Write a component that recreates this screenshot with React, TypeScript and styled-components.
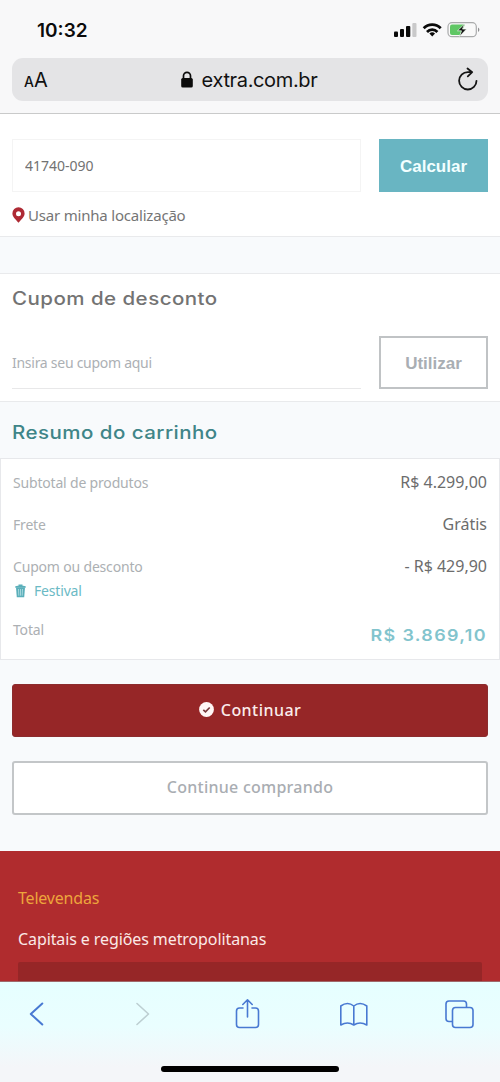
import React from 'react';
import styled, { createGlobalStyle } from 'styled-components';

const GlobalStyle = createGlobalStyle`
  * { box-sizing: border-box; }
  html, body { margin: 0; padding: 0; }
  body { background: #f8fafc; font-family: "Noto Sans", "Open Sans", sans-serif; color: #6b6b6b; }
  button, input { font: inherit; margin: 0; border-radius: 0; outline: none; }
`;

const Screen = styled.div`
  width: 500px;
  height: 1082px;
  display: flex;
  flex-direction: column;
  overflow: hidden;
  background: #f8fafc;
`;

const BrowserTop = styled.header`
  height: 114px;
  flex: none;
  padding: 0 12px;
  background: #f8f8f9;
  border-bottom: 1px solid #c9caca;
`;

const StatusBar = styled.div`
  height: 58px;
  display: flex;
  align-items: center;
  justify-content: space-between;
  padding: 2px 8px 0 25px;
`;

const Clock = styled.span`
  padding-top: 2px;
  font: 600 19px/24px Inter, sans-serif;
  letter-spacing: 0;
  color: #0b0b0b;
`;

const AddressBar = styled.div`
  height: 43px;
  display: flex;
  align-items: center;
  justify-content: space-between;
  padding: 0 9px 0 12px;
  border-radius: 11px;
  background: #e4e4e6;
  color: #111;
  font-family: Inter, sans-serif;
`;

const TextSize = styled.span`
  width: 60px;
  padding-top: 2px;
  font-size: 20px;
  line-height: 24px;
  small { font-size: 14px; font-weight: 500; }
`;

const Domain = styled.span`
  display: flex;
  align-items: center;
  gap: 9px;
  margin-right: 5px;
  font-size: 20px;
  line-height: 24px;
  letter-spacing: -0.35px;
`;

const ReloadSlot = styled.span`
  width: 60px;
  display: flex;
  justify-content: flex-end;
`;

const Panel = styled.section<{ $height: number; $top: number }>`
  height: ${p => p.$height}px;
  flex: none;
  padding: ${p => p.$top}px 12px 0;
  background: #fff;
  border-bottom: 1px solid #e9eaec;
`;

const Spacer = styled.div`
  height: 37px;
  flex: none;
  border-bottom: 1px solid #e9eaec;
`;

const FieldRow = styled.div<{ $offset?: number }>`
  height: 53px;
  margin-top: ${p => p.$offset ?? 0}px;
  display: grid;
  grid-template-columns: 349px 109px;
  gap: 18px;
`;

const Field = styled.input<{ $underline?: boolean }>`
  width: 100%;
  min-width: 0;
  height: 53px;
  padding: ${p => (p.$underline ? '0' : '0 12px')};
  border: ${p => (p.$underline ? '0' : '1px solid #f4f4f4')};
  border-bottom: 1px solid ${p => (p.$underline ? '#e8e8e9' : '#f4f4f4')};
  background: #fff;
  color: #727272;
  font-size: 14px;
  letter-spacing: ${p => (p.$underline ? '-0.27px' : '0')};
  &::placeholder { color: #acb0b4; opacity: 1; }
`;

const ActionButton = styled.button<{ $outline?: boolean }>`
  padding: 2px 0 0;
  border: ${p => (p.$outline ? '2px solid #c0c3c5' : '0')};
  background: ${p => (p.$outline ? '#fff' : '#69b5c2')};
  color: ${p => (p.$outline ? '#a9aeb3' : '#f2ffff')};
  font: 700 17px/20px "Liberation Sans", Arial, sans-serif;
`;

const LocationLink = styled.a`
  display: flex;
  align-items: center;
  gap: 3px;
  margin-top: 12px;
  font-size: 15px;
  line-height: 22px;
  letter-spacing: -0.2px;
  color: #757575;
`;

const Heading = styled.h2<{ $color: string }>`
  margin: 0;
  width: max-content;
  transform: scaleX(1.14);
  transform-origin: left;
  font: 500 18px/24px Inter, sans-serif;
  letter-spacing: 0.4px;
  color: ${p => p.$color};
`;

const SummaryHeader = styled.div`
  height: 56px;
  flex: none;
  padding: 19px 12px 0;
`;

const Summary = styled.section`
  height: 202px;
  flex: none;
  padding: 12px 12px 0;
  background: #fff;
  border: 1px solid #e7e8eb;
`;

const SummaryRow = styled.div<{ $height: number }>`
  height: ${p => p.$height}px;
  display: flex;
  justify-content: space-between;
  align-items: flex-start;
`;

const Label = styled.div`
  padding-top: 1px;
  font-size: 14px;
  line-height: 22px;
  letter-spacing: -0.18px;
  color: #acb0b3;
`;

const Amount = styled.div`
  font-size: 16px;
  line-height: 22px;
  color: #6c6c6c;
`;

const GrandTotal = styled.div`
  margin-top: 6px;
  font: 600 16px/22px Inter, sans-serif;
  letter-spacing: 1.2px;
  transform: scaleX(1.12);
  transform-origin: right;
  color: #82c4cd;
`;

const Coupon = styled.a`
  display: flex;
  align-items: center;
  gap: 8px;
  padding-left: 2px;
  margin-top: 2px;
  color: #6bbac5;
`;

const Actions = styled.div`
  flex: none;
  padding: 24px 12px 36px;
  display: flex;
  flex-direction: column;
  gap: 24px;
`;

const WideButton = styled.button<{ $primary?: boolean }>`
  height: ${p => (p.$primary ? 53 : 54)}px;
  display: flex;
  align-items: center;
  justify-content: center;
  gap: 7px;
  padding: 0 0 2px;
  border: ${p => (p.$primary ? '1px solid #8c2c2e' : '2px solid #c3c6c8')};
  border-radius: 3px;
  background: ${p => (p.$primary ? '#962627' : '#fff')};
  color: ${p => (p.$primary ? '#fbeceb' : '#a9adb2')};
  font-size: 16px;
  font-weight: 500;
  letter-spacing: ${p => (p.$primary ? 0.45 : 0.25)}px;
`;

const Footer = styled.footer`
  height: 130px;
  flex: none;
  overflow: hidden;
  padding: 35px 18px 0;
  background: #b02c2e;
  color: #fbe9e7;
`;

const FooterTitle = styled.h3`
  margin: 0 0 17px;
  font-size: 16px;
  line-height: 24px;
  font-weight: 400;
  letter-spacing: -0.2px;
  color: #eda53c;
`;

const FooterText = styled.p`
  margin: 0;
  font-size: 16px;
  line-height: 24px;
  letter-spacing: -0.1px;
`;

const PhoneBox = styled.div`
  height: 40px;
  margin-top: 11px;
  background: #962627;
  border-radius: 2px;
`;

const Toolbar = styled.nav`
  height: 101px;
  flex: none;
  display: flex;
  flex-direction: column;
  align-items: center;
  justify-content: space-between;
  border-top: 1px solid #a0686a;
  background: linear-gradient(#e6ffff 0, #eafeff 45px, #f4f6f9 85px);
  padding-bottom: 10px;
`;

const ToolbarIcons = styled.div`
  width: 100%;
  display: flex;
  justify-content: space-between;
  padding: 14px 26px 0 22px;
`;

const HomeIndicator = styled.div`
  width: 178px;
  height: 6px;
  border-radius: 3px;
  background: #000;
`;

const StatusIcons = () => (
  <svg width="88" height="20" viewBox="392 20 88 20">
    <rect x="394" y="31.5" width="4" height="5.5" rx="1" fill="#0a0a0a" />
    <rect x="400" y="29" width="4" height="8" rx="1" fill="#0a0a0a" />
    <rect x="406" y="26" width="4.3" height="11" rx="1" fill="#0a0a0a" />
    <rect x="412.3" y="23" width="4.2" height="14" rx="1" fill="#c9c9ca" />
    <g fill="none" stroke="#0a0a0a" strokeWidth="2.8">
      <path d="M423.7 28.2a12 12 0 0 1 17 0" />
      <path d="M427 31.9a7.3 7.3 0 0 1 10.4 0" />
    </g>
    <path d="M429.4 33.6a4 4 0 0 1 5.6 0L432.2 36.6z" fill="#0a0a0a" />
    <rect x="448" y="22.7" width="28.3" height="14" rx="4" fill="#f9f9f9" stroke="#a9aaab" strokeWidth="1.2" />
    <path d="M452 24.4h13l-5 10.600h-8q-2 0-2-2v-6.600q0-2 2-2z" fill="#60c765" />
    <path d="M464.500 24l-7 6.800h4l-2 5.600 7-7.300h-4z" fill="#111" stroke="#f4fff4" strokeWidth=".7" />
    <path d="M478 27.500v4.500q1.400-.8 1.400-2.250t-1.400-2.250" fill="#8d8e8f" />
  </svg>
);

const LockIcon = () => (
  <svg width="12" height="17" viewBox="0 0 12 17">
    <rect x=".2" y="7" width="11.600" height="9.500" rx="1.600" fill="#0b0b0b" />
    <path d="M2.500 8V4.800a3.500 3.500 0 0 1 7 0V8" fill="none" stroke="#0b0b0b" strokeWidth="1.700" />
  </svg>
);

const ReloadIcon = () => (
  <svg width="22" height="25" viewBox="457 67 22 25" fill="none" stroke="#151515" strokeWidth="1.800" strokeLinecap="round" strokeLinejoin="round">
    <path d="M476.500 80.800a8.700 8.700 0 1 1-8.700-8.700h4.400M467.500 68.500l4.700 3.700-4.400 4.100" />
  </svg>
);

const PinIcon = () => (
  <svg width="13" height="16" viewBox="0 0 13 16">
    <path fillRule="evenodd" d="M6.500.3a6.100 6.100 0 0 0-6.100 6.100c0 3.900 4.600 7 6.100 9.300 1.500-2.300 6.100-5.400 6.100-9.300A6.100 6.100 0 0 0 6.500.3zm0 3.900a2.500 2.500 0 1 1 0 5 2.500 2.500 0 0 1 0-5z" fill="#ae2a34" />
  </svg>
);

const TrashIcon = () => (
  <svg width="11" height="14" viewBox="0 0 11 14">
    <path d="M.3 2.300Q5.500.8 10.700 2.300v1.400H.3zM3.500 1.800V.6h4v1.200" fill="#5aafba" />
    <path d="M1 3.500h9l-.8 9.700H1.800z" fill="#5aafba" />
    <path d="M3.500 5l.3 6.700M5.500 5v6.700M7.500 5l-.3 6.700" stroke="#b9e0e4" strokeWidth=".8" />
  </svg>
);

const CheckIcon = () => (
  <svg width="15" height="15" viewBox="0 0 15 15">
    <circle cx="7.500" cy="7.500" r="7.400" fill="#fff6f5" />
    <path d="M4.300 7.800l2.200 2 4.200-4.300" fill="none" stroke="#78393c" strokeWidth="1.700" />
  </svg>
);

const NavIcon = styled.svg.attrs({ width: 30, height: 36, fill: 'none', strokeLinecap: 'round', strokeLinejoin: 'round' })<{ $muted?: boolean }>`
  stroke: ${p => (p.$muted ? '#bdcfd2' : '#4879d2')};
  stroke-width: 1.6;
`;

export default function App() {
  return (
    <>
      <GlobalStyle />
      <Screen>
        <BrowserTop>
          <StatusBar>
            <Clock>10:32</Clock>
            <StatusIcons />
          </StatusBar>
          <AddressBar>
            <TextSize><small>A</small>A</TextSize>
            <Domain><LockIcon />extra.com.br</Domain>
            <ReloadSlot><ReloadIcon /></ReloadSlot>
          </AddressBar>
        </BrowserTop>

        <Panel $height={123} $top={25}>
          <FieldRow>
            <Field defaultValue="41740-090" />
            <ActionButton>Calcular</ActionButton>
          </FieldRow>
          <LocationLink><PinIcon />Usar minha localização</LocationLink>
        </Panel>
        <Spacer />
        <Panel $height={128} $top={13}>
          <Heading $color="#737373">Cupom de desconto</Heading>
          <FieldRow $offset={25}>
            <Field $underline placeholder="Insira seu cupom aqui" />
            <ActionButton $outline>Utilizar</ActionButton>
          </FieldRow>
        </Panel>

        <SummaryHeader>
          <Heading $color="#3f8588">Resumo do carrinho</Heading>
        </SummaryHeader>
        <Summary>
          <SummaryRow $height={42}><Label>Subtotal de produtos</Label><Amount>R$ 4.299,00</Amount></SummaryRow>
          <SummaryRow $height={42}><Label>Frete</Label><Amount>Grátis</Amount></SummaryRow>
          <SummaryRow $height={63}>
            <Label>Cupom ou desconto<Coupon><TrashIcon />Festival</Coupon></Label>
            <Amount>- R$ 429,90</Amount>
          </SummaryRow>
          <SummaryRow $height={42}><Label>Total</Label><GrandTotal>R$ 3.869,10</GrandTotal></SummaryRow>
        </Summary>

        <Actions>
          <WideButton $primary><CheckIcon />Continuar</WideButton>
          <WideButton>Continue comprando</WideButton>
        </Actions>

        <Footer>
          <FooterTitle>Televendas</FooterTitle>
          <FooterText>Capitais e regiões metropolitanas</FooterText>
          <PhoneBox />
        </Footer>

        <Toolbar>
          <ToolbarIcons>
            <NavIcon viewBox="22 996 30 36"><path d="M42.300 1003.500L30.800 1014l11.500 10.500" strokeWidth="2" /></NavIcon>
            <NavIcon $muted viewBox="127.500 996 30 36"><path d="M136.500 1003.500L148 1014l-11.500 10.500" /></NavIcon>
            <NavIcon viewBox="233 996 30 36"><path d="M243 1008h-3.500q-3 0-3 3v13.500q0 3 3 3h16q3 0 3-3V1011q0-3-3-3H252M247.500 1017v-17M242.800 1004.500l4.700-4.700 4.700 4.700" /></NavIcon>
            <NavIcon viewBox="338.500 996 30 36"><path d="M353.300 1006q-6.200-5-13 0v19q6.800-4 13 0 6.200-4 13 0v-19q-6.800-5-13 0v19" /></NavIcon>
            <NavIcon viewBox="444 996 30 36"><path d="M452 1021.500h-3q-3 0-3-3V1004q0-3 3-3h14.500q3 0 3 3v3" /><rect x="452.500" y="1007.500" width="20.500" height="20" rx="3" /></NavIcon>
          </ToolbarIcons>
          <HomeIndicator />
        </Toolbar>
      </Screen>
    </>
  );
}
